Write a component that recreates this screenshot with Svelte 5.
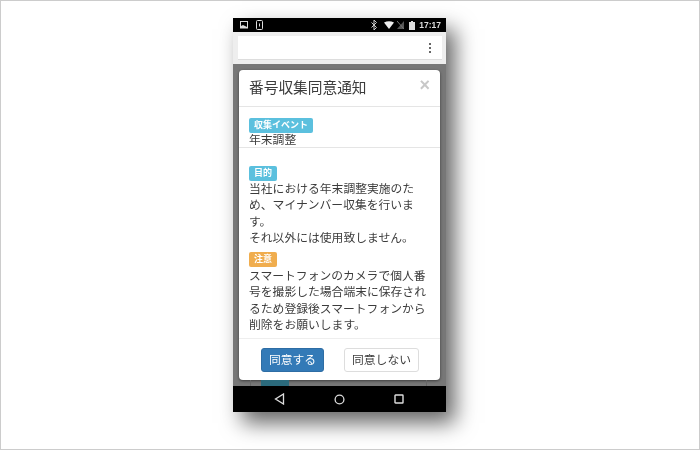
<script>
	let title = '番号収集同意通知';
</script>

<main>
	<div class="phone">
		<div class="status">
			<svg class="ic" width="8" height="8" viewBox="0 0 8 8"><rect x="0.5" y="0.5" width="7" height="6.5" fill="none" stroke="#ddd"/><path d="M1 7V5l2-1 4 2v1z" fill="#ddd"/></svg>
			<svg class="ic" width="7" height="10" viewBox="0 0 7 10"><rect x="0.5" y="0.5" width="6" height="9" rx="1" fill="none" stroke="#ddd"/><rect x="3" y="3.500" width="1" height="3" fill="#ddd"/></svg>
			<span class="grow"></span>
			<svg width="6" height="10" viewBox="0 0 6 10"><path d="M0.5 2.500l5 5L3 10V0l2.500 2.500-5 5" fill="none" stroke="#ccc"/></svg>
			<svg class="wifi" width="10" height="8" viewBox="0 0 10 8"><path d="M0 1.500Q5-1 10 1.500L5 8z" fill="#eee"/></svg>
			<svg class="sim" width="7" height="8" viewBox="0 0 7 8"><path d="M0 8L7 0V8z" fill="#555"/><path d="M0 0l7 8" stroke="#777"/></svg>
			<svg class="bat" width="6" height="9" viewBox="0 0 6 9"><path d="M0 1h2V0h2v1h2v8H0z" fill="#ddd"/></svg>
			<span class="time">17:17</span>
		</div>
		<div class="appbar">
			<div class="box">
				<svg width="2" height="10" viewBox="0 0 2 10"><circle cx="1" cy="1" r="1" fill="#333"/><circle cx="1" cy="5" r="1" fill="#333"/><circle cx="1" cy="9" r="1" fill="#333"/></svg>
			</div>
		</div>
		<div class="screen">
			<section class="modal">
				<header>
					<h2>{title}</h2>
					<span class="close">×</span>
				</header>
				<div class="event">
					<span class="tag info wide">収集イベント</span>
					<p>年末調整</p>
				</div>
				<div class="body">
					<span class="tag info">目的</span>
					<p>当社における年末調整実施のため、マイナンバー収集を行います。<br />それ以外には使用致しません。</p>
					<span class="tag warn">注意</span>
					<p>スマートフォンのカメラで個人番号を撮影した場合端末に保存されるため登録後スマートフォンから削除をお願いします。</p>
				</div>
				<footer>
					<button class="primary">同意する</button>
					<button class="plain">同意しない</button>
				</footer>
			</section>
			<div class="peek"><span></span></div>
		</div>
		<nav>
			<svg width="11" height="12" viewBox="0 0 11 12"><path d="M9.500 1v10L1.500 6z" fill="none" stroke="#ddd" stroke-width="1.300"/></svg>
			<svg width="11" height="11" viewBox="0 0 11 11"><circle cx="5.500" cy="5.500" r="4.400" fill="none" stroke="#ddd" stroke-width="1.300"/></svg>
			<svg width="10" height="10" viewBox="0 0 10 10"><rect x="1" y="1" width="8" height="8" rx="0.500" fill="none" stroke="#ddd" stroke-width="1.400"/></svg>
		</nav>
	</div>
</main>

<style>
	:global(body) {
		background: #fff;
	}
	main {
		width: 700px;
		height: 450px;
		box-sizing: border-box;
		border: 1px solid #ccc;
		display: flex;
		padding: 17px 0 0 232px;
		font-family: "Noto Sans CJK JP", "Liberation Sans", sans-serif;
		color: #3c3c3c;
		overflow: hidden;
	}
	.phone {
		width: 213px;
		height: 394px;
		display: flex;
		flex-direction: column;
		box-shadow: 9px 11px 20px rgba(0, 0, 0, 0.6);
		filter: blur(0.35px);
	}
	.status {
		height: 14px;
		background: #000;
		display: flex;
		align-items: center;
		gap: 5px;
		padding: 0 5px 0 7px;
		flex: none;
	}
	.status .ic + .ic {
		margin-left: 3px;
	}
	.grow {
		flex: 1;
	}
	.wifi {
		margin-left: 2px;
	}
	.sim {
		margin-left: -2px;
	}
	.time {
		font: bold 8.500px "Liberation Sans", sans-serif;
		color: #ddd;
		margin-left: -1px;
	}
	.appbar {
		height: 32px;
		box-sizing: border-box;
		background: #eee;
		padding: 4px 4px 4px 5px;
		flex: none;
	}
	.box {
		height: 24px;
		background: #fff;
		border-bottom: 1px solid #ddd;
		box-sizing: border-box;
		display: flex;
		align-items: center;
		justify-content: flex-end;
		padding-right: 11px;
	}
	.screen {
		height: 322px;
		background: #777;
		padding: 6px 6px 0;
		box-sizing: border-box;
		flex: none;
	}
	.modal {
		height: 310px;
		width: 201px;
		box-sizing: border-box;
		background: #fff;
		border-radius: 4px;
		box-shadow: 0 1px 3px rgba(0, 0, 0, 0.5);
		display: flex;
		flex-direction: column;
	}
	header {
		height: 37px;
		box-sizing: border-box;
		border-bottom: 1px solid #e5e5e5;
		padding: 0 10px 2px;
		display: flex;
		align-items: center;
		justify-content: space-between;
		flex: none;
	}
	h2 {
		margin: 0;
		font-size: 14.700px;
		font-weight: 400;
		line-height: 1;
	}
	.close {
		color: #c8c8c8;
		font: bold 18px "Liberation Sans", sans-serif;
		margin-top: -3px;
	}
	p {
		margin: 0;
		font-size: 11.800px;
		line-height: 16.300px;
	}
	.event {
		height: 41px;
		box-sizing: border-box;
		border-bottom: 1px solid #e5e5e5;
		padding: 11px 10px 0;
		flex: none;
	}
	.event p {
		line-height: 12px;
	}
	.tag {
		display: block;
		width: 28px;
		height: 15px;
		line-height: 14px;
		border-radius: 2px;
		color: #fff;
		font-size: 9px;
		font-weight: 700;
		text-align: center;
	}
	.wide {
		width: 64px;
	}
	.info {
		background: #5bc0de;
	}
	.warn {
		background: #f0ad4e;
	}
	.body {
		padding: 18px 10px 0;
		flex: 1;
	}
	.body .tag + p {
		margin-top: -1px;
	}
	.body p + .tag {
		margin-top: 7px;
	}
	.body .warn + p {
		margin-top: 0;
	}
	footer {
		height: 42px;
		box-sizing: border-box;
		border-top: 1px solid #eee;
		padding: 9px 21px 0 22px;
		display: flex;
		justify-content: space-between;
		align-items: flex-start;
		flex: none;
	}
	button {
		height: 24px;
		padding: 0 0 3px;
		border-radius: 3px;
		font: 11.800px "Noto Sans CJK JP", sans-serif;
	}
	.primary {
		width: 63px;
		background: #337ab7;
		border: 1px solid #2e6da4;
		color: #fff;
	}
	.plain {
		width: 75px;
		background: #fff;
		border: 1px solid #ddd;
		color: #3c3c3c;
	}
	.peek {
		height: 6px;
		margin: 0 13px 0 11px;
		border-left: 1px solid #666;
		border-right: 1px solid #666;
		padding-left: 10px;
	}
	.peek span {
		display: block;
		width: 28px;
		height: 6px;
		background: #2b6a7c;
	}
	nav {
		height: 26px;
		background: #000;
		display: flex;
		align-items: center;
		justify-content: space-between;
		padding: 0 42px 0 41px;
		flex: none;
	}
</style>
